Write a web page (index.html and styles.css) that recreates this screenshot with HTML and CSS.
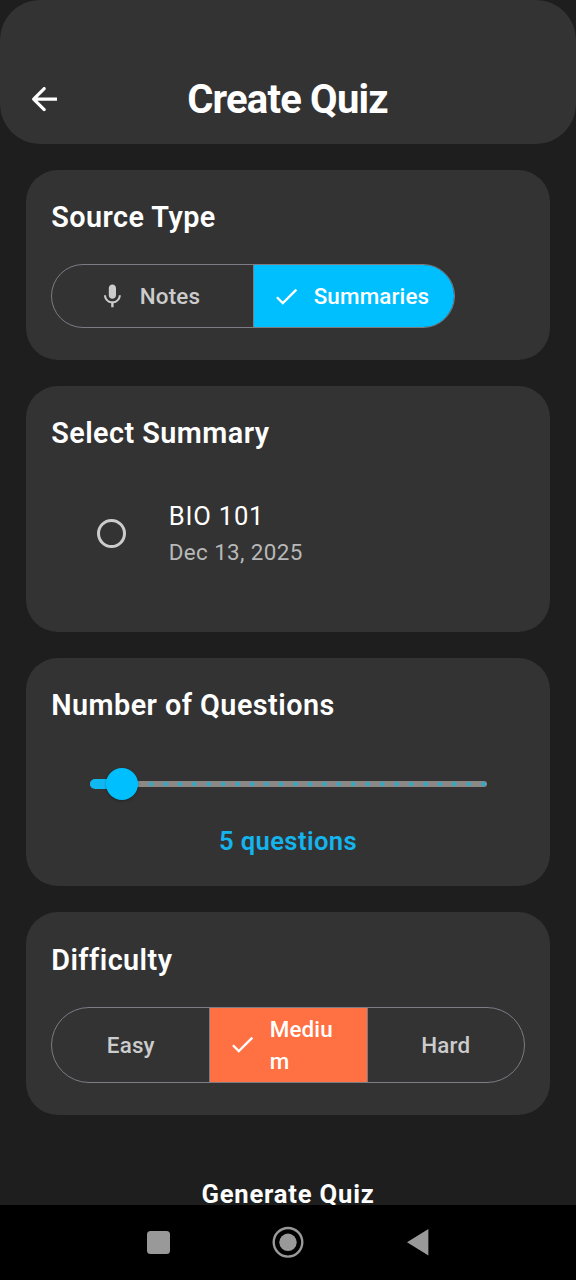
FILE: index.html
```html
<!DOCTYPE html>
<html lang="en">
<head>
  <meta charset="UTF-8" />
  <meta name="viewport" content="width=device-width, initial-scale=1.0"/>
  <title>Create Quiz</title>
  <link rel="stylesheet" href="styles.css">
</head>
<body>

  <header class="app-bar">
    <svg class="back-icon" viewBox="0 0 24 24"><path d="M20 11H7.83l4.88-4.88c.39-.39.39-1.03 0-1.42-.39-.39-1.02-.39-1.41 0L4.7 11.3c-.39.39-.39 1.02 0 1.41l6.6 6.59c.39.39 1.02.39 1.41 0 .39-.39.39-1.02 0-1.41L7.83 13H20v-2z"/></svg>
    <h1>Create Quiz</h1>
  </header>

  <main class="content">
    <section class="card source-card">
      <h2>Source Type</h2>
      <div class="segments source">
        <button class="segment">
          <svg class="icon" viewBox="0 0 24 24"><path d="M12 14c1.66 0 3-1.34 3-3V5c0-1.66-1.34-3-3-3S9 3.34 9 5v6c0 1.66 1.34 3 3 3zM17.3 11c0 3-2.54 5.1-5.3 5.1S6.7 14 6.7 11H5c0 3.41 2.72 6.23 6 6.72V21h2v-3.28c3.28-.48 6-3.3 6-6.72h-1.7z"/></svg>
          <span>Notes</span>
        </button>
        <button class="segment selected">
          <svg class="icon" viewBox="0 0 24 24"><path d="M9 16.17 4.83 12l-1.42 1.41L9 19 21 7l-1.41-1.41z"/></svg>
          <span>Summaries</span>
        </button>
      </div>
    </section>

    <section class="card summary-card">
      <h2>Select Summary</h2>
      <div class="summary">
        <span class="radio"></span>
        <div>
          <div class="summary-name">BIO 101</div>
          <div class="summary-date">Dec 13, 2025</div>
        </div>
      </div>
    </section>

    <section class="card questions-card">
      <h2>Number of Questions</h2>
      <div class="slider">
        <div class="track"></div>
        <div class="track-active"></div>
        <div class="thumb"></div>
      </div>
      <div class="count">5 questions</div>
    </section>

    <section class="card difficulty-card">
      <h2>Difficulty</h2>
      <div class="segments difficulty">
        <button class="segment">Easy</button>
        <button class="segment selected">
          <svg class="icon" viewBox="0 0 24 24"><path d="M9 16.17 4.83 12l-1.42 1.41L9 19 21 7l-1.41-1.41z"/></svg>
          <span>Mediu<br>m</span>
        </button>
        <button class="segment">Hard</button>
      </div>
    </section>

    <button class="generate-btn">Generate Quiz</button>
  </main>

  <nav class="nav-bar">
    <svg viewBox="0 0 32 32"><rect x="5" y="5" width="23" height="23" rx="3.5"/></svg>
    <svg viewBox="0 0 32 32"><circle class="ring" cx="16" cy="16.3" r="14.3"/><circle cx="16" cy="16.3" r="8.7"/></svg>
    <svg viewBox="0 0 32 32"><path d="M5 16.3 26.4 3v26.4z"/></svg>
  </nav>

</body>
</html>
```

FILE: styles.css
```css
* {
  box-sizing: border-box;
}

body {
  margin: 0;
  height: 1280px;
  overflow: hidden;
  display: flex;
  flex-direction: column;
  font-family: Roboto, sans-serif;
  background: #1e1e1e;
  color: #fff;
}

h1, h2 {
  margin: 0;
}

button {
  margin: 0;
  padding: 0;
  border: none;
  background: none;
  color: inherit;
  font-family: inherit;
}

.app-bar {
  flex: none;
  height: 144px;
  padding: 55px 26px 0 25px;
  border-radius: 40px;
  background: #333;
  display: grid;
  grid-template-columns: 38.4px 1fr 38.4px;
  align-items: center;
}

.back-icon {
  width: 38.4px;
  height: 38.4px;
  fill: #fff;
}

h1 {
  font-size: 40px;
  font-weight: 700;
  letter-spacing: -0.8px;
  line-height: 48px;
  text-align: center;
}

.content {
  flex: 1;
  min-height: 0;
  overflow: hidden;
  padding: 25.6px 25.6px 0;
  display: flex;
  flex-direction: column;
  gap: 25.6px;
}

.card {
  flex: none;
  padding: 25.6px;
  border-radius: 32px;
  background: #333;
}

.source-card {
  height: 190.4px;
}

.summary-card {
  height: 246.4px;
}

.questions-card {
  height: 228.8px;
}

.difficulty-card {
  height: 203.2px;
}

h2 {
  font-size: 28.8px;
  font-weight: 600;
  letter-spacing: 0.45px;
  line-height: 45px;
}

.segments {
  display: grid;
  border: 1.6px solid #7d7b84;
  overflow: hidden;
}

.source {
  width: 404px;
  height: 64px;
  margin-top: 24px;
  border-radius: 32px;
  grid-template-columns: 1fr 1fr;
}

.difficulty {
  height: 76px;
  margin-top: 24px;
  border-radius: 38px;
  grid-template-columns: 1fr 1fr 1fr;
}

.segment {
  display: flex;
  align-items: center;
  justify-content: center;
  gap: 12.8px;
  font-size: 22.4px;
  font-weight: 500;
  letter-spacing: 0.16px;
  line-height: 32px;
  text-align: left;
  color: #ccc;
}

.source .segment {
  padding-right: 7px;
}

.segment + .segment {
  border-left: 1.6px solid #7d7b84;
}

.icon {
  flex: none;
  width: 28.8px;
  height: 28.8px;
  fill: currentColor;
}

.selected {
  color: #fff;
}

.source .selected {
  background: #00bfff;
}

.difficulty .selected {
  padding-right: 16px;
  background: #ff7043;
}

.summary {
  display: flex;
  align-items: center;
  gap: 43px;
  margin-top: 42px;
  padding-left: 45.5px;
}

.radio {
  width: 29px;
  height: 29px;
  border: 3.2px solid #ccc;
  border-radius: 50%;
}

.summary-name {
  font-size: 25.6px;
  letter-spacing: 0.8px;
  line-height: 37px;
}

.summary-date {
  font-size: 22.4px;
  letter-spacing: 0.4px;
  line-height: 34px;
  color: #b8b8b8;
}

.slider {
  position: relative;
  width: 397px;
  height: 32px;
  margin: 40px 0 0 38.4px;
  display: flex;
  align-items: center;
}

/* one tick for each question count from 3 to 30 */
.track {
  width: 100%;
  height: 6px;
  border-radius: 3px;
  background: radial-gradient(circle, #35a8c4 1.8px, transparent 2.8px) -4px 0 / 14.46px 6px, #8c8885;
}

.track-active {
  position: absolute;
  left: 0;
  top: 11px;
  width: 32px;
  height: 10px;
  border-radius: 5px;
  background: #10b8f2;
}

.thumb {
  position: absolute;
  left: 16px;
  top: 0;
  width: 32px;
  height: 32px;
  border-radius: 50%;
  background: #00bfff;
  box-shadow: 0 1px 3px rgba(0, 0, 0, 0.3);
}

.count {
  margin-top: 22px;
  font-size: 25.6px;
  font-weight: 600;
  letter-spacing: 0.4px;
  line-height: 38px;
  text-align: center;
  color: #14b4ec;
}

.generate-btn {
  flex: none;
  margin: 32px -25.6px 0;
  height: 44px;
  font-size: 25.6px;
  font-weight: 700;
  letter-spacing: 0.8px;
  line-height: 43px;
}

.nav-bar {
  flex: none;
  height: 75px;
  padding: 0 0 1px 142px;
  display: flex;
  align-items: center;
  gap: 98px;
  background: #000;
}

.nav-bar svg {
  width: 32px;
  height: 32px;
  fill: #999;
}

.nav-bar .ring {
  fill: none;
  stroke: #999;
  stroke-width: 2.4;
}
```
